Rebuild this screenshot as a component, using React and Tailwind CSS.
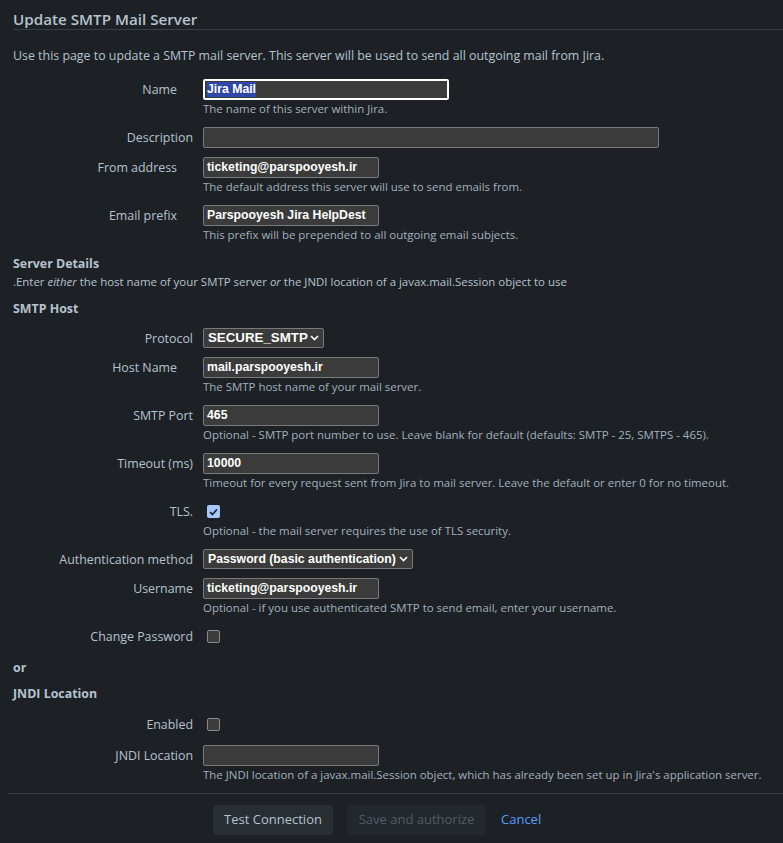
import React from "react";

const sans = { fontFamily: '"Open Sans", "Noto Sans", sans-serif' };

function Label({ children, req }) {
  return (
    <div className="w-[180px] shrink-0 text-right leading-[21px] text-[12.4px] text-[#b6c2cf]">
      {children}
      {req ? <span className="inline-block w-[16px]" /> : null}
    </div>
  );
}

function Desc({ children }) {
  return <div className="leading-[18px] text-[11.45px] text-[#a3b0bd] whitespace-nowrap">{children}</div>;
}

function Input({ value, w = "w-[176px]", children }) {
  return (
    <div
      className={`${w} h-[21px] bg-[#3b3b3b] border border-[#7a7a7a] rounded-[2px] px-[3px] flex items-center text-white font-bold text-[12.25px] whitespace-nowrap overflow-hidden`}
      style={{ fontFamily: '"Liberation Sans", Arial, sans-serif' }}
    >
      {children || value}
    </div>
  );
}

function Select({ value, w, size = "text-[12.25px]" }) {
  return (
    <div
      className={`${w} ${size} h-[20px] bg-[#3b3b3b] border border-[#7a7a7a] rounded-[2px] pl-[4px] pr-[4px] flex items-center justify-between text-white font-bold whitespace-nowrap`}
      style={{ fontFamily: '"Liberation Sans", Arial, sans-serif' }}
    >
      <span>{value}</span>
      <svg width="9" height="6" viewBox="0 0 9 6" className="ml-[2px]">
        <path d="M1 1 L4.5 4.5 L8 1" stroke="white" strokeWidth="1.6" fill="none" />
      </svg>
    </div>
  );
}

function Checkbox({ checked }) {
  return (
    <div className="h-[21px] flex items-center pl-[4px]">
      {checked ? (
        <div className="w-[13px] h-[13px] rounded-[2px] bg-[#a8c7fa] flex items-center justify-center">
          <svg width="9" height="8" viewBox="0 0 9 8">
            <path d="M1 4.2 L3.4 6.5 L8 1.3" stroke="#1f2a3a" strokeWidth="1.8" fill="none" />
          </svg>
        </div>
      ) : (
        <div className="w-[13px] h-[13px] rounded-[2px] bg-[#3b3b3b] border border-[#8a8a8a]" />
      )}
    </div>
  );
}

function Row({ label, req, children, desc, mb = "mb-[9px]" }) {
  return (
    <div className={`flex ${mb}`}>
      <Label req={req}>{label}</Label>
      <div className="ml-[10px]">
        {children}
        {desc ? <Desc>{desc}</Desc> : null}
      </div>
    </div>
  );
}

export default function App() {
  return (
    <div className="min-h-[843px] w-[783px] bg-[#1d2125] overflow-hidden" style={sans}>
      <div className="pl-[13px]">
        <h2 className="pt-[9px] leading-[20px] text-[15.2px] font-semibold text-[#b6c2cf] border-b border-[#3a3f45]">
          Update SMTP Mail Server
        </h2>
        <p className="mt-[17px] leading-[18px] text-[12.4px] text-[#b6c2cf]">
          Use this page to update a SMTP mail server. This server will be used to send all outgoing mail from Jira.
        </p>

        <div className="mt-[14px]">
          <Row label="Name" req desc="The name of this server within Jira.">
            <div
              className="w-[246px] h-[21px] bg-[#3b3b3b] border-2 border-white rounded-[2px] px-[2px] flex items-center text-white font-bold text-[12.25px]"
              style={{ fontFamily: '"Liberation Sans", Arial, sans-serif' }}
            >
              <span className="bg-[#2f48a8] leading-[15px]">Jira Mail</span>
            </div>
          </Row>
          <Row label="Description">
            <Input w="w-[456px]" value="" />
          </Row>
          <Row label="From address" req desc="The default address this server will use to send emails from.">
            <Input value="ticketing@parspooyesh.ir" />
          </Row>
          <Row label="Email prefix" req desc="This prefix will be prepended to all outgoing email subjects." mb="mb-[11px]">
            <Input value="Parspooyesh Jira HelpDest" />
          </Row>
        </div>

        <div className="font-bold leading-[18px] text-[12.4px] text-[#b6c2cf]">Server Details</div>
        <div className="leading-[17px] text-[11.45px] text-[#b6c2cf]">
          .Enter <em>either</em> the host name of your SMTP server <em>or</em> the JNDI location of a javax.mail.Session object to use
        </div>
        <div className="mt-[10px] font-bold leading-[18px] text-[12.4px] text-[#b6c2cf]">SMTP Host</div>

        <div className="mt-[10px]">
          <Row label="Protocol" mb="mb-[8px]">
            <Select value="SECURE_SMTP" w="w-[121px]" size="text-[13.3px]" />
          </Row>
          <Row label="Host Name" req desc="The SMTP host name of your mail server.">
            <Input value="mail.parspooyesh.ir" />
          </Row>
          <Row label="SMTP Port" desc="Optional - SMTP port number to use. Leave blank for default (defaults: SMTP - 25, SMTPS - 465).">
            <Input value="465" />
          </Row>
          <Row label="Timeout (ms)" desc="Timeout for every request sent from Jira to mail server. Leave the default or enter 0 for no timeout.">
            <Input value="10000" />
          </Row>
          <Row label="TLS." desc="Optional - the mail server requires the use of TLS security.">
            <Checkbox checked />
          </Row>
          <Row label="Authentication method" mb="mb-[8px]">
            <Select value="Password (basic authentication)" w="w-[210px]" />
          </Row>
          <Row label="Username" desc="Optional - if you use authenticated SMTP to send email, enter your username.">
            <Input value="ticketing@parspooyesh.ir" />
          </Row>
          <Row label="Change Password" mb="mb-[12px]">
            <Checkbox />
          </Row>
        </div>

        <div className="font-bold leading-[18px] text-[12.4px] text-[#b6c2cf]">or</div>
        <div className="mt-[8px] font-bold leading-[18px] text-[12.4px] text-[#b6c2cf]">JNDI Location</div>

        <div className="mt-[11px]">
          <Row label="Enabled" mb="mb-[10px]">
            <Checkbox />
          </Row>
          <Row
            label="JNDI Location"
            desc="The JNDI location of a javax.mail.Session object, which has already been set up in Jira's application server."
          >
            <Input value="" />
          </Row>
        </div>

        <div className="-ml-[5px] border-t border-[#3a3f45] pt-[11px] pl-[205px] flex items-center">
          <button className="h-[30px] px-[8px] rounded-[3px] bg-[#282e33] text-[13px] text-[#b6c2cf] w-[120px]">
            Test Connection
          </button>
          <button className="ml-[14px] h-[30px] px-[8px] rounded-[3px] bg-[#23282d] text-[13px] text-[#525c67] w-[139px]">
            Save and authorize
          </button>
          <span className="ml-[15px] text-[13px] text-[#579dff]">Cancel</span>
        </div>
      </div>
    </div>
  );
}
